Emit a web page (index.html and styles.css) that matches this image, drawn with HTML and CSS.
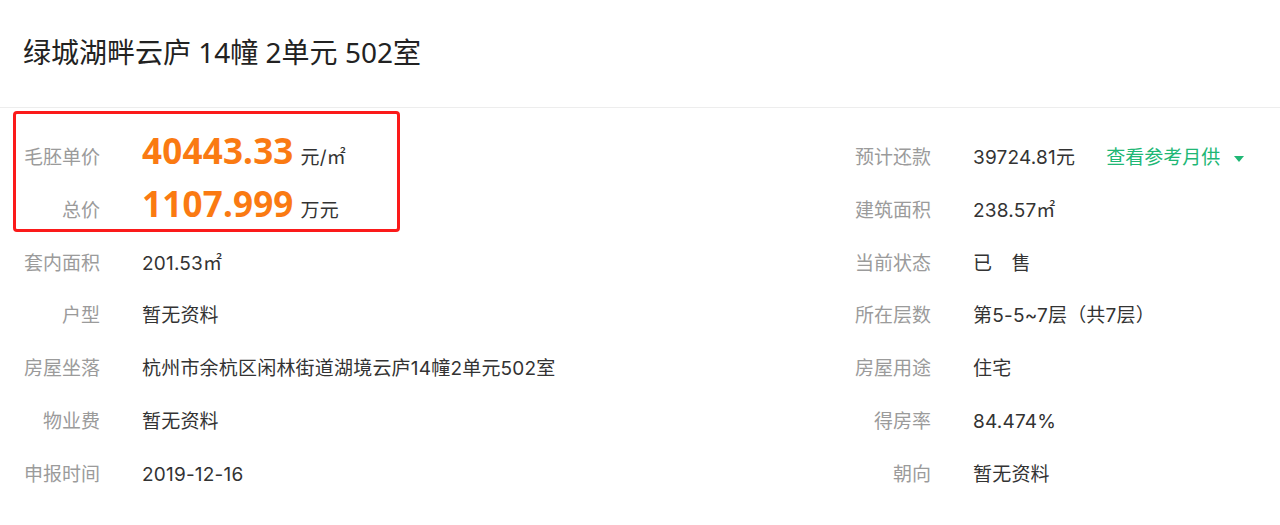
FILE: index.html
```html
<!DOCTYPE html>
<html lang="zh-CN">
<head>
<meta charset="utf-8">
<title>绿城湖畔云庐 14幢 2单元 502室</title>
<link rel="stylesheet" href="styles.css">
</head>
<body>
<div class="page">
  <header class="head">
    <h1 class="title">绿城湖畔云庐 14幢 2单元 502室</h1>
  </header>
  <section class="info">
    <div class="cell"><span class="label">毛胚单价</span><span class="value"><span class="price">40443.33</span><span class="unit">元/㎡</span></span></div>
    <div class="cell"><span class="label">预计还款</span><span class="value">39724.81元</span><span class="link">查看参考月供<span class="caret"></span></span></div>

    <div class="cell"><span class="label">总价</span><span class="value"><span class="price">1107.999</span><span class="unit">万元</span></span></div>
    <div class="cell"><span class="label">建筑面积</span><span class="value">238.57㎡</span></div>

    <div class="cell"><span class="label">套内面积</span><span class="value">201.53㎡</span></div>
    <div class="cell"><span class="label">当前状态</span><span class="value">已　售</span></div>

    <div class="cell"><span class="label">户型</span><span class="value">暂无资料</span></div>
    <div class="cell"><span class="label">所在层数</span><span class="value">第5-5~7层（共7层）</span></div>

    <div class="cell"><span class="label">房屋坐落</span><span class="value">杭州市余杭区闲林街道湖境云庐14幢2单元502室</span></div>
    <div class="cell"><span class="label">房屋用途</span><span class="value">住宅</span></div>

    <div class="cell"><span class="label">物业费</span><span class="value">暂无资料</span></div>
    <div class="cell"><span class="label">得房率</span><span class="value">84.474%</span></div>

    <div class="cell"><span class="label">申报时间</span><span class="value">2019-12-16</span></div>
    <div class="cell"><span class="label">朝向</span><span class="value">暂无资料</span></div>
  </section>
  <div class="highlight"></div>
</div>
</body>
</html>
```

FILE: styles.css
```css
* { box-sizing: border-box; }
html, body {
  margin: 0;
  padding: 0;
  background: #fff;
}
body {
  font-family: Inter, "Noto Sans CJK SC", sans-serif;
  color: #333;
}
.page {
  position: relative;
  width: 1280px;
  height: 525px;
  overflow: hidden;
}
.head {
  height: 108px;
  display: flex;
  align-items: center;
  padding: 0 0 4px 23px;
  border-bottom: 1px solid #ededed;
}
.title {
  margin: 0;
  font-family: "Noto Sans", "Noto Sans CJK SC", sans-serif;
  font-size: 28px;
  font-weight: normal;
  color: #222;
  line-height: 1;
}
.info {
  display: grid;
  grid-template-columns: 831px 1fr;
  grid-auto-rows: 52.8px;
  padding: 24px 0 0 23px;
}
.cell {
  display: flex;
  align-items: baseline;
  font-size: 19px;
  line-height: 52px;
  white-space: nowrap;
}
.label {
  width: 77px;
  flex: none;
  text-align: right;
  color: #9b9b9b;
  margin-right: 42px;
}
.value {
  color: #333;
  letter-spacing: 0.2px;
}
.price {
  font-family: "Noto Sans", "Noto Sans CJK SC", sans-serif;
  font-size: 35px;
  line-height: 1;
  font-weight: 700;
  color: #fa7a12;
  letter-spacing: 0.2px;
}
.unit {
  margin-left: 7px;
  font-size: 19px;
  color: #333;
}
.link {
  margin-left: 31px;
  color: #20b775;
  display: inline-flex;
  align-items: center;
}
.caret {
  display: inline-block;
  width: 0;
  height: 0;
  margin-left: 14px;
  border-left: 5px solid transparent;
  border-right: 5px solid transparent;
  border-top: 6px solid #20b775;
  position: relative;
  top: 1px;
}
.highlight {
  position: absolute;
  left: 13px;
  top: 111px;
  width: 387px;
  height: 121px;
  border: 3px solid #fb1a1a;
  border-radius: 4px;
  pointer-events: none;
}
```
